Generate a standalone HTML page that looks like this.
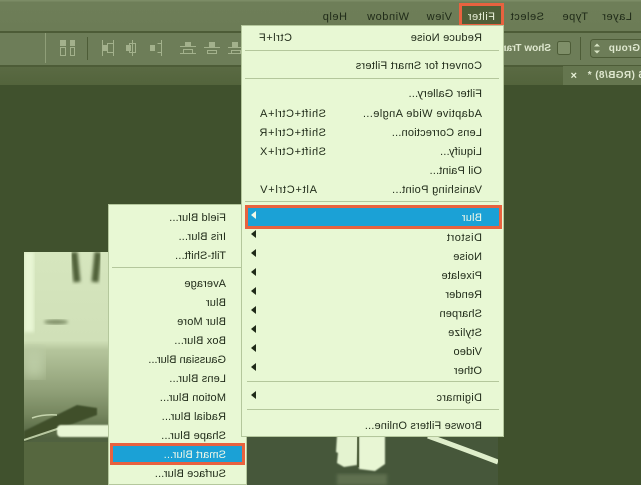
<!DOCTYPE html>
<html><head><meta charset="utf-8"><style>
html,body{margin:0;padding:0;background:#40512d}
#p{position:relative;width:641px;height:485px;overflow:hidden;background:#40512d;font-family:"Liberation Sans",sans-serif;font-size:11px;color:#1f2a18}
#p div{position:absolute}
.t{white-space:pre;line-height:14px;height:14px;margin-top:1px;transform-origin:0 0;transform:scaleX(-1);letter-spacing:.2px}
.m{letter-spacing:.55px}
.u{letter-spacing:.15px}
.s{height:1px;background:#b4c79c}
.a{width:0;height:0;border-style:solid;border-width:4px 5px 4px 0;border-color:transparent #1f2a18 transparent transparent;left:251px}
</style></head><body><div id="p">
<div style="left:0;top:0;width:641px;height:31px;background:linear-gradient(#7c8c66 0,#7c8c66 1px,#6e7e58 2px,#6c7c56 31px)"></div>
<div style="left:0;top:31px;width:641px;height:2px;background:#4d5c37"></div>
<div style="left:0;top:33px;width:641px;height:32px;background:#6d7d58"></div>
<div style="left:0;top:65px;width:641px;height:2px;background:#4d5c37"></div>
<div style="left:0;top:67px;width:641px;height:18px;background:linear-gradient(#5a6a43,#53643c)"></div>
<div style="left:563px;top:66px;width:78px;height:19px;background:#65764f"></div>
<div class="t" style="left:644px;top:68px;color:#dfe8cf;font-weight:bold;font-size:10px;letter-spacing:.4px">6 (RGB/8) *</div>
<div class="t" style="left:577px;top:68px;color:#e8f0d8;font-weight:bold">×</div>

<svg style="position:absolute;left:0;top:0" width="641" height="70" fill="none" stroke="#a3b18c" stroke-width="1">
<path d="M45.5 33V63" stroke="#8f9e78"/><path d="M87.5 37V60" stroke="#4d5c37"/>
<path d="M60.5 47.5h5v8h-5zM70.5 47.5h4v8h-4z"/><path d="M60 40h6v6h-6zM70 40h5v6h-5z" fill="#a3b18c" stroke="none"/>
<path d="M102.5 40V56M113.5 43.5h-6v9h6M113.5 40V56"/><rect x="102" y="45" width="5" height="6" fill="#a3b18c" stroke="none"/>
<path d="M132.5 40V56M135.5 43.5h-6v9h6z"/><rect x="126" y="45" width="5" height="6" fill="#a3b18c" stroke="none"/>
<path d="M161.5 40V56M157.5 43.5h4v9h-4"/><rect x="150" y="45" width="5" height="6" fill="#a3b18c" stroke="none"/>
<path d="M180 46.5h16M183.5 49.5h9v4h-9zM180 53.5h16"/><rect x="185" y="42" width="6" height="4" fill="#a3b18c" stroke="none"/>
<path d="M204 47.5h16M207.5 50.5h9v3h-9z"/><rect x="209" y="42" width="6" height="5" fill="#a3b18c" stroke="none"/>
<path d="M228 47.5h13M231.5 50.5h9v3h-9zM228 53.5h13"/><rect x="232" y="42" width="6" height="5" fill="#a3b18c" stroke="none"/>
<path d="M580.5 37V60" stroke="#4d5c37"/>
<rect x="557.5" y="41.5" width="13" height="13" rx="2" fill="#7f8f69" stroke="#4d5c37"/>
<rect x="590.5" y="39.5" width="60" height="18" rx="3" fill="#6d7d58" stroke="#4d5c37"/>
<path d="M594 46.5l3-3 3 3zM594 50.5l3 3 3-3z" fill="#d8e4c4" stroke="none"/>
</svg>
<div class="t" style="left:551px;top:41px;color:#dfe8cf;font-weight:bold;font-size:10px;letter-spacing:0">Show Transform</div>
<div class="t" style="left:640px;top:41px;color:#dfe8cf;font-size:10px;font-weight:bold;letter-spacing:.3px">Group</div>

<div class="t m" style="left:347px;top:9px">Help</div>
<div class="t m" style="left:409px;top:9px">Window</div>
<div class="t m" style="left:452px;top:9px">View</div>
<div style="left:459px;top:3px;width:39px;height:18px;border:3px solid #e8623f;background:#4f5f38"></div>
<div class="t m" style="left:495px;top:9px;color:#e8f0d8">Filter</div>
<div class="t m" style="left:544px;top:9px">Select</div>
<div class="t m" style="left:588px;top:9px">Type</div>
<div class="t m" style="left:632px;top:9px">Layer</div>

<svg style="position:absolute;left:24px;top:252px" width="474" height="233" viewBox="0 0 474 233">
<defs><filter id="b1"><feGaussianBlur stdDeviation="1.5"/></filter><filter id="b2"><feGaussianBlur stdDeviation="6"/></filter><filter id="b3"><feGaussianBlur stdDeviation=".7"/></filter>
<linearGradient id="g" x1="0" y1="0" x2="0" y2="1"><stop offset="0" stop-color="#d6e6be"/><stop offset=".38" stop-color="#d0e0b8"/><stop offset=".42" stop-color="#b5c59c"/><stop offset=".6" stop-color="#8f9f77"/><stop offset=".7" stop-color="#74855d"/><stop offset=".8" stop-color="#50613f"/><stop offset="1" stop-color="#56674a"/></linearGradient></defs>
<rect width="474" height="233" fill="url(#g)"/>
<rect x="0" y="0" width="10" height="80" fill="#e8f6d4" filter="url(#b1)"/>
<path d="M50 0L53 30M74 0L71 30" stroke="#4f6038" stroke-width="7" filter="url(#b1)"/>
<path d="M25 71H90" stroke="#a5b58c" stroke-width="3" filter="url(#b1)"/>
<ellipse cx="32" cy="70" rx="12" ry="2.5" fill="#7f8f68" filter="url(#b1)"/>
<rect x="0" y="95" width="20" height="30" fill="#bccca5" filter="url(#b2)"/>
<path d="M0 179L53 153L73 156L73 163L0 190Z" fill="#3f502c" filter="url(#b3)"/>
<path d="M0 188L36 176" stroke="#b8c8a0" stroke-width="2"/>
<path d="M8 166q12-4 25-3" stroke="#c5d4ad" stroke-width="1.5" fill="none"/>
<rect x="0" y="190" width="90" height="43" fill="#56673f"/>
<rect x="33" y="173" width="60" height="12" rx="4" fill="#e8f6d4" filter="url(#b3)"/>
<rect x="222" y="184" width="252" height="49" fill="#46573a"/>
<path d="M313 184l-1 16 2 1-1 10 7 4 13-2 1-29z" fill="#e4f3d0" filter="url(#b3)"/>
<path d="M335 184v33l16 2 10-7v-28z" fill="#e8f6d4" filter="url(#b3)"/>
<path d="M334 185v30" stroke="#40512d" stroke-width="1.5"/>
<path d="M404 184Q440 197 474 210" stroke="#dfeecb" stroke-width="5" fill="none"/>
<rect x="313" y="222" width="50" height="11" fill="#5f7050" filter="url(#b1)"/>
</svg>

<div style="left:108px;top:204px;width:137px;height:279px;border:1px solid #b4c79c;background:#e8f8d4"></div>
<div class="s" style="left:112px;top:267px;width:131px"></div>
<div style="left:110px;top:443px;width:129px;height:16px;border:3px solid #e8623f;background:#1ba1d6"></div>
<div class="t u" style="left:226px;top:210px">Field Blur...</div>
<div class="t u" style="left:226px;top:229px">Iris Blur...</div>
<div class="t u" style="left:226px;top:248px">Tilt-Shift...</div>
<div class="t u" style="left:226px;top:276px">Average</div>
<div class="t u" style="left:226px;top:295px">Blur</div>
<div class="t u" style="left:226px;top:314px">Blur More</div>
<div class="t u" style="left:226px;top:333px">Box Blur...</div>
<div class="t" style="left:226px;top:352px;letter-spacing:0">Gaussian Blur...</div>
<div class="t u" style="left:226px;top:371px">Lens Blur...</div>
<div class="t u" style="left:226px;top:390px">Motion Blur...</div>
<div class="t u" style="left:226px;top:409px">Radial Blur...</div>
<div class="t u" style="left:226px;top:428px">Shape Blur...</div>
<div class="t u" style="left:226px;top:447px;color:#f0f8e8">Smart Blur...</div>
<div class="t u" style="left:226px;top:466px">Surface Blur...</div>

<div style="left:241px;top:25px;width:261px;height:410px;border:1px solid #b4c79c;background:#e8f8d4"></div>
<div class="s" style="left:245px;top:50px;width:254px"></div>
<div class="s" style="left:245px;top:78px;width:254px"></div>
<div class="s" style="left:245px;top:201px;width:254px"></div>
<div class="s" style="left:247px;top:381px;width:252px"></div>
<div class="s" style="left:247px;top:409px;width:252px"></div>
<div style="left:245px;top:205px;width:251px;height:18px;border:3px solid #e8623f;background:#1ba1d6"></div>

<div class="t" style="left:482px;top:30px">Reduce Noise</div>
<div class="t m" style="left:292px;top:30px">Ctrl+F</div>
<div class="t" style="left:482px;top:58px;letter-spacing:.27px">Convert for Smart Filters</div>
<div class="t" style="left:482px;top:86px;letter-spacing:.17px">Filter Gallery...</div>
<div class="t" style="left:482px;top:106px;letter-spacing:.4px">Adaptive Wide Angle...</div>
<div class="t" style="left:326px;top:106px;letter-spacing:.6px">Shift+Ctrl+A</div>
<div class="t" style="left:482px;top:125px">Lens Correction...</div>
<div class="t" style="left:326px;top:125px;letter-spacing:.6px">Shift+Ctrl+R</div>
<div class="t" style="left:482px;top:144px">Liquify...</div>
<div class="t" style="left:326px;top:144px;letter-spacing:.6px">Shift+Ctrl+X</div>
<div class="t" style="left:482px;top:163px;letter-spacing:.15px">Oil Paint...</div>
<div class="t" style="left:482px;top:182px;letter-spacing:.3px">Vanishing Point...</div>
<div class="t" style="left:317px;top:182px;letter-spacing:.75px">Alt+Ctrl+V</div>
<div class="t" style="left:482px;top:210px;color:#f0f8e8">Blur</div>
<div class="t m" style="left:482px;top:230px">Distort</div>
<div class="t u" style="left:482px;top:249px">Noise</div>
<div class="t" style="left:482px;top:268px">Pixelate</div>
<div class="t" style="left:482px;top:287px;letter-spacing:.1px">Render</div>
<div class="t u" style="left:482px;top:306px">Sharpen</div>
<div class="t" style="left:482px;top:325px;letter-spacing:.25px">Stylize</div>
<div class="t u" style="left:482px;top:344px">Video</div>
<div class="t u" style="left:482px;top:363px">Other</div>
<div class="t" style="left:482px;top:390px;letter-spacing:.3px">Digimarc</div>
<div class="t u" style="left:482px;top:418px">Browse Filters Online...</div>

<div class="a" style="top:211px;border-right-color:#f0f8e8"></div>
<div class="a" style="top:230px"></div>
<div class="a" style="top:249px"></div>
<div class="a" style="top:268px"></div>
<div class="a" style="top:287px"></div>
<div class="a" style="top:306px"></div>
<div class="a" style="top:325px"></div>
<div class="a" style="top:344px"></div>
<div class="a" style="top:363px"></div>
<div class="a" style="top:391px"></div>
</div></body></html>
